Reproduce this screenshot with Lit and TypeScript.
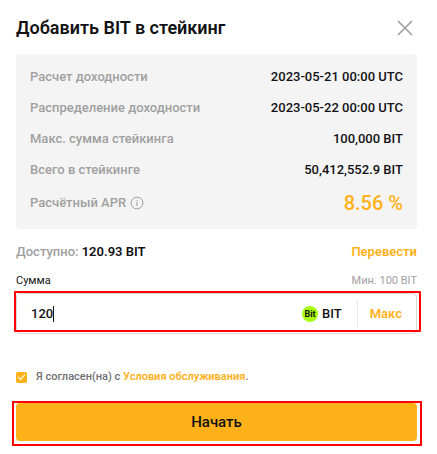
import { LitElement, html, css, svg } from "lit";
import { customElement, state } from "lit/decorators.js";

interface Fact {
  label: string;
  value: string;
}

const facts: Fact[] = [
  { label: "Расчет доходности", value: "2023-05-21 00:00 UTC" },
  { label: "Распределение доходности", value: "2023-05-22 00:00 UTC" },
  { label: "Макс. сумма стейкинга", value: "100,000 BIT" },
  { label: "Всего в стейкинге", value: "50,412,552.9 BIT" },
];

const closeIcon = svg`<svg width="16" height="16" viewBox="0 0 16 16" aria-hidden="true">
  <path d="M1 1L15 15M15 1L1 15" fill="none" stroke="#a0a0a0" stroke-width="1.6"/>
</svg>`;

const infoIcon = svg`<svg width="14" height="14" viewBox="0 0 14 14" aria-hidden="true">
  <circle cx="7" cy="7" r="5.9" fill="none" stroke="#a0a0a0" stroke-width="1"/>
  <path d="M7 4V5M7 6V10" fill="none" stroke="#a8a8a8" stroke-width="1.2"/>
</svg>`;

@customElement("app-root")
export class AppRoot extends LitElement {
  static styles = css`
    :host {
      display: block;
      box-sizing: border-box;
      padding: 16px 20px 13px 16px;
      background: #fff;
      color: #121214;
      font: 500 13px/18px Roboto, "Noto Sans", sans-serif;
    }
    *, *::before, *::after { box-sizing: border-box; }
    button, input { font: inherit; color: inherit; margin: 0; }
    button { border: 0; padding: 0; background: none; cursor: pointer; }
    a { color: #ffb11a; text-decoration: none; }
    h1, dl, dd, p { margin: 0; }
    svg { display: block; }

    .head, .row, .line { display: flex; justify-content: space-between; align-items: center; }
    .head { margin-bottom: 14px; }
    h1 { font-size: 18px; line-height: 24px; font-weight: 600; }
    .close { padding: 4px; }

    .facts {
      display: flex;
      flex-direction: column;
      gap: 13px;
      padding: 14px 14px 15px;
      border-radius: 4px;
      background: #f4f4f4;
    }
    dt { display: flex; align-items: center; gap: 4px; color: #a0a0a0; }
    .apr { font-size: 20px; line-height: 22px; color: #ffb11a; }

    .balance { margin-top: 14px; }
    .muted { color: #a0a0a0; }
    .strong, .accent { font-weight: 600; }
    .accent { color: #ffb11a; }
    .caption { margin: 12px 0 4px; font-size: 11px; line-height: 16px; font-weight: 400; }

    .marked { position: relative; }
    .marked::after {
      content: "";
      position: absolute;
      border: 2px solid #f00;
      pointer-events: none;
    }
    .field {
      display: flex;
      align-items: center;
      height: 41px;
      padding: 0 14px;
      border: 1px solid #d8d8da;
      border-radius: 4px;
    }
    .field::after { inset: -3px -5px 1px -3px; border-radius: 1px; }
    .entry { flex: 1; display: flex; align-items: center; }
    .amount {
      field-sizing: content;
      width: auto;
      border: 0;
      padding: 0;
      outline: 0;
      background: none;
      caret-color: transparent;
    }
    .caret { width: 1px; height: 16px; background: #121214; }
    .coin { display: flex; align-items: center; gap: 4px; }
    .token {
      width: 16px;
      height: 16px;
      border-radius: 50%;
      background: #a8ff12;
      font-size: 9px;
      line-height: 16px;
      font-weight: 700;
      text-align: center;
    }
    .max { margin-left: 15px; padding: 5px 0 5px 12px; border-left: 1px solid #e8e8ea; }

    .agree {
      display: flex;
      align-items: center;
      gap: 9px;
      margin: 34px 0 17px;
      font-size: 11px;
      color: #6f6f73;
    }
    .tick {
      appearance: none;
      width: 11px;
      height: 11px;
      border-radius: 2px;
      background: #ffb11a;
      display: grid;
      place-items: center;
    }
    .tick:checked::before {
      content: "";
      width: 7px;
      height: 4px;
      border: solid #fff;
      border-width: 0 0 1px 1px;
      transform: translateY(-1px) rotate(-45deg);
    }
    .action::after { inset: -2px -5px -5px -4px; }
    .start {
      display: block;
      width: 100%;
      padding: 9px 0;
      border-radius: 4px;
      background: #ffb11a;
      font-size: 15px;
      line-height: 20px;
    }
  `;

  @state() private amount = "120";
  @state() private agreed = true;

  render() {
    return html`
      <header class="head">
        <h1>Добавить BIT в стейкинг</h1>
        <button class="close" aria-label="Закрыть">${closeIcon}</button>
      </header>
      <dl class="facts">
        ${facts.map((f) => html`<div class="row"><dt>${f.label}</dt><dd>${f.value}</dd></div>`)}
        <div class="row"><dt>Расчётный APR ${infoIcon}</dt><dd class="apr">8.56 %</dd></div>
      </dl>
      <div class="line balance">
        <p><span class="muted">Доступно:</span> <span class="strong">120.93 BIT</span></p>
        <a class="accent" href="#transfer">Перевести</a>
      </div>
      <div class="line caption">
        <label for="amount">Сумма</label>
        <span class="muted">Мин. 100 BIT</span>
      </div>
      <div class="field marked">
        <div class="entry">
          <input class="amount" id="amount" inputmode="decimal" .value=${this.amount}
            @input=${(e: Event) => (this.amount = (e.target as HTMLInputElement).value)} />
          <span class="caret"></span>
        </div>
        <span class="coin"><span class="token" aria-hidden="true">Bit</span>BIT</span>
        <button class="max accent" @click=${() => (this.amount = "120.93")}>Макс</button>
      </div>
      <div class="agree">
        <input class="tick" id="agree" type="checkbox" .checked=${this.agreed}
          @change=${(e: Event) => (this.agreed = (e.target as HTMLInputElement).checked)} />
        <label for="agree">Я согласен(на) с <a class="accent" href="#terms">Условия обслуживания</a>.</label>
      </div>
      <div class="action marked">
        <button class="start" ?disabled=${!this.agreed}>Начать</button>
      </div>
    `;
  }
}
